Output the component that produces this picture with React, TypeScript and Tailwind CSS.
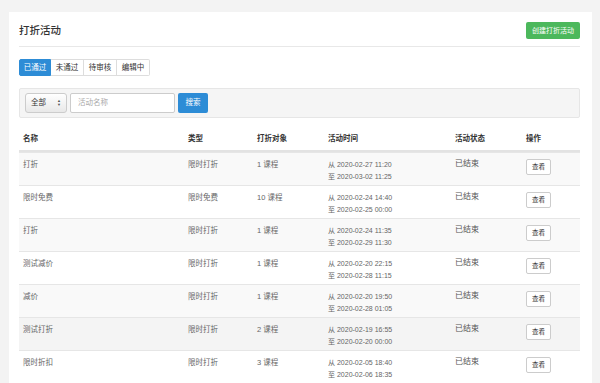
const rows = [
  { name: '打折', type: '限时打折', target: '1 课程', from: '2020-02-27 11:20', to: '2020-03-02 11:25', bg: 'bg-[#f9f9f9]' },
  { name: '限时免费', type: '限时免费', target: '10 课程', from: '2020-02-24 14:40', to: '2020-02-25 00:00', bg: 'bg-white' },
  { name: '打折', type: '限时打折', target: '1 课程', from: '2020-02-24 11:35', to: '2020-02-29 11:30', bg: 'bg-[#f9f9f9]' },
  { name: '测试减价', type: '限时打折', target: '1 课程', from: '2020-02-20 22:15', to: '2020-02-28 11:15', bg: 'bg-white' },
  { name: '减价', type: '限时打折', target: '1 课程', from: '2020-02-20 19:50', to: '2020-02-28 01:05', bg: 'bg-[#f9f9f9]' },
  { name: '测试打折', type: '限时打折', target: '2 课程', from: '2020-02-19 16:55', to: '2020-02-20 00:00', bg: 'bg-[#f4f4f4]' },
  { name: '限时折扣', type: '限时打折', target: '3 课程', from: '2020-02-05 18:40', to: '2020-02-06 18:35', bg: 'bg-white' },
]

const tabs = ['已通过', '未通过', '待审核', '编辑中']

const cols = 'grid grid-cols-[165px_69px_71px_127px_71px_58px]'

export default function App() {
  return (
    <div
      className="w-[600px] h-[383px] overflow-hidden bg-[#f3f3f3] pt-[12px] pl-[9px] pr-[8px] text-[#555]"
      style={{ fontFamily: '"Liberation Sans", "Noto Sans CJK SC", sans-serif' }}
    >
      <div className="h-full bg-white pl-[10px] pr-[12px] pt-[10px]">
        {/* header */}
        <div className="flex items-center justify-between border-b border-[#e8e8e8] pb-[7px]">
          <h1 className="text-[10.5px] font-medium text-[#333] leading-[17px]">打折活动</h1>
          <button className="h-[17px] px-[6px] rounded-[2px] bg-[#4cb85c] text-white text-[7px] leading-none">
            创建打折活动
          </button>
        </div>

        {/* status tabs */}
        <div className="mt-[12px] flex">
          {tabs.map((t, i) => (
            <div
              key={t}
              className={
                i === 0
                  ? 'h-[17px] w-[32px] flex items-center justify-center text-[7.5px] bg-[#2d8cd6] text-white border border-[#2d8cd6] rounded-l-[2px]'
                  : 'h-[17px] w-[33px] flex items-center justify-center text-[7.5px] text-[#333] border border-l-0 border-[#ddd] last:rounded-r-[2px]'
              }
            >
              {t}
            </div>
          ))}
        </div>

        {/* search bar */}
        <div className="mt-[12px] h-[30px] flex items-center gap-[3px] bg-[#f5f5f5] border border-[#e6e6e6] rounded-[2px] px-[5px]">
          <div className="h-[20px] w-[42px] flex items-center justify-between px-[5px] border border-[#ccc] rounded-[3px] bg-gradient-to-b from-white to-[#e8e8e8] text-[7.5px] text-[#333]">
            <span>全部</span>
            <span className="flex flex-col text-[4px] leading-[4px] text-[#555]">
              <span>▲</span>
              <span>▼</span>
            </span>
          </div>
          <div className="h-[20px] w-[105px] flex items-center px-[7px] border border-[#ccc] rounded-[2px] bg-white text-[7.5px] text-[#aaa]">
            活动名称
          </div>
          <button className="h-[20px] w-[30px] rounded-[2px] bg-[#2d8cd6] text-white text-[7.5px]">搜索</button>
        </div>

        {/* table */}
        <div className="mt-[10px]">
          <div className={`${cols} h-[24px] items-center border-b-2 border-[#e3e3e3] text-[7.5px] font-semibold text-[#333]`}>
            <div className="pl-[4px]">名称</div>
            <div className="pl-[4px]">类型</div>
            <div className="pl-[4px]">打折对象</div>
            <div className="pl-[4px]">活动时间</div>
            <div className="pl-[4px]">活动状态</div>
            <div className="pl-[4px]">操作</div>
          </div>
          {rows.map((r, i) => (
            <div key={i} className={`${cols} h-[33px] border-t border-[#e6e6e6] first:border-t-0 ${r.bg} text-[7.5px] leading-[12px] text-[#666]`}>
              <div className="pl-[4px] pt-[6px]">{r.name}</div>
              <div className="pl-[4px] pt-[6px]">{r.type}</div>
              <div className="pl-[4px] pt-[6px]">{r.target}</div>
              <div className="pl-[4px] pt-[6px] text-[7px] leading-[12px]">
                <div>从 {r.from}</div>
                <div>至 {r.to}</div>
              </div>
              <div className="pl-[4px] pt-[5px] text-[8px] text-[#555]">已结束</div>
              <div className="pl-[4px] pt-[6px]">
                <button className="h-[16px] w-[25px] border border-[#ccc] rounded-[2px] bg-white text-[6.5px] text-[#333]">
                  查看
                </button>
              </div>
            </div>
          ))}
        </div>
      </div>
    </div>
  )
}
